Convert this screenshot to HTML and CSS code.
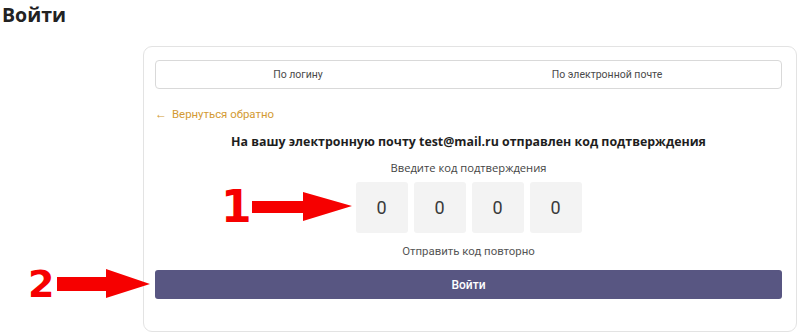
FILE: index.html
```html
<!DOCTYPE html>
<html lang="ru">
<head>
<meta charset="utf-8">
<title>Войти</title>
<link rel="stylesheet" href="styles.css">
</head>
<body>
<div class="page">
  <h1 class="title">Войти</h1>
  <div class="card">
    <div class="tabs">
      <div class="tab">По логину</div>
      <div class="tab">По электронной почте</div>
    </div>
    <a class="back" href="#"><span class="back-arrow">←</span>Вернуться обратно</a>
    <p class="notice">На вашу электронную почту test@mail.ru отправлен код подтверждения</p>
    <p class="hint">Введите код подтверждения</p>
    <div class="code">
      <div class="cell">0</div>
      <div class="cell">0</div>
      <div class="cell">0</div>
      <div class="cell">0</div>
    </div>
    <p class="resend">Отправить код повторно</p>
    <button class="submit">Войти</button>
  </div>

  <div class="mark mark-1">
    <span class="num">1</span>
    <svg class="arrow" width="102" height="30" viewBox="0 0 102 30"><polygon points="0,9 51,9 51,0 100,14 51,29 51,21 0,21" fill="#f60000"/></svg>
  </div>
  <div class="mark mark-2">
    <span class="num num-2">2</span>
    <svg class="arrow" width="96" height="30" viewBox="0 0 96 30"><polygon points="0,8 49,8 49,0 93,15 49,29 49,22 0,22" fill="#f60000"/></svg>
  </div>
</div>
</body>
</html>
```
FILE: styles.css
```css
* { box-sizing: border-box; }
html, body { margin: 0; padding: 0; background: #fff; }
body { font-family: Roboto, "Open Sans", sans-serif; color: #333; }
.page { position: relative; width: 800px; height: 335px; }
.title {
  margin: 0;
  padding: 1px 0 0 2px;
  height: 46px;
  font-family: "Open Sans", sans-serif;
  font-weight: 700;
  font-size: 19.5px;
  line-height: 28px;
  color: #222;
}
.card {
  margin-left: 143px;
  width: 654px;
  height: 286px;
  border: 1px solid #e3e3e3;
  border-radius: 9px;
  padding: 13px 14px 0 11px;
  display: flex;
  flex-direction: column;
}
.tabs {
  display: grid;
  grid-template-columns: 284px 334px;
  height: 29px;
  border: 1px solid #d9d9d9;
  border-radius: 4px;
}
.tab {
  display: flex;
  align-items: center;
  justify-content: center;
  font-size: 10.5px;
  color: #4a4a4a;
}
.back {
  margin-top: 17px;
  height: 16px;
  line-height: 16px;
  font-size: 11.4px;
  color: #d39a33;
  text-decoration: none;
  display: flex;
  align-items: center;
}
.back-arrow { width: 17px; font-size: 12px; }
.notice {
  margin: 11px 0 0;
  line-height: 18px;
  font-family: "Open Sans", sans-serif;
  font-weight: 700;
  font-size: 12.4px;
  text-align: center;
  color: #1e1e1e;
}
.hint {
  margin: 9px 0 0;
  line-height: 16px;
  font-family: "Open Sans", sans-serif;
  font-size: 11.2px;
  text-align: center;
  color: #444;
}
.code {
  margin-top: 6px;
  display: flex;
  justify-content: center;
  gap: 6px;
}
.cell {
  width: 52px;
  height: 51px;
  background: #f3f3f3;
  border-radius: 3px;
  display: flex;
  align-items: center;
  justify-content: center;
  font-size: 18px;
  color: #3a3a3a;
}
.resend {
  margin: 10px 0 0;
  line-height: 16px;
  font-size: 11.4px;
  text-align: center;
  color: #555;
}
.submit {
  margin-top: 11px;
  height: 29px;
  border: none;
  border-radius: 3px;
  background: #585682;
  color: #fff;
  font-family: Roboto, sans-serif;
  font-weight: 500;
  font-size: 12px;
  padding: 0;
}
.mark {
  position: absolute;
  display: flex;
  align-items: center;
}
.mark-1 { left: 221px; top: 181px; }
.mark-2 { left: 28px; top: 261px; }
.num {
  font-family: "DejaVu Sans", sans-serif;
  font-weight: 700;
  font-size: 44px;
  line-height: 52px;
  color: #f60000;
  margin-right: 3px;
  letter-spacing: -3px;
}
.num-2 { font-size: 38px; line-height: 46px; margin-right: 3px; letter-spacing: 0; }
```
